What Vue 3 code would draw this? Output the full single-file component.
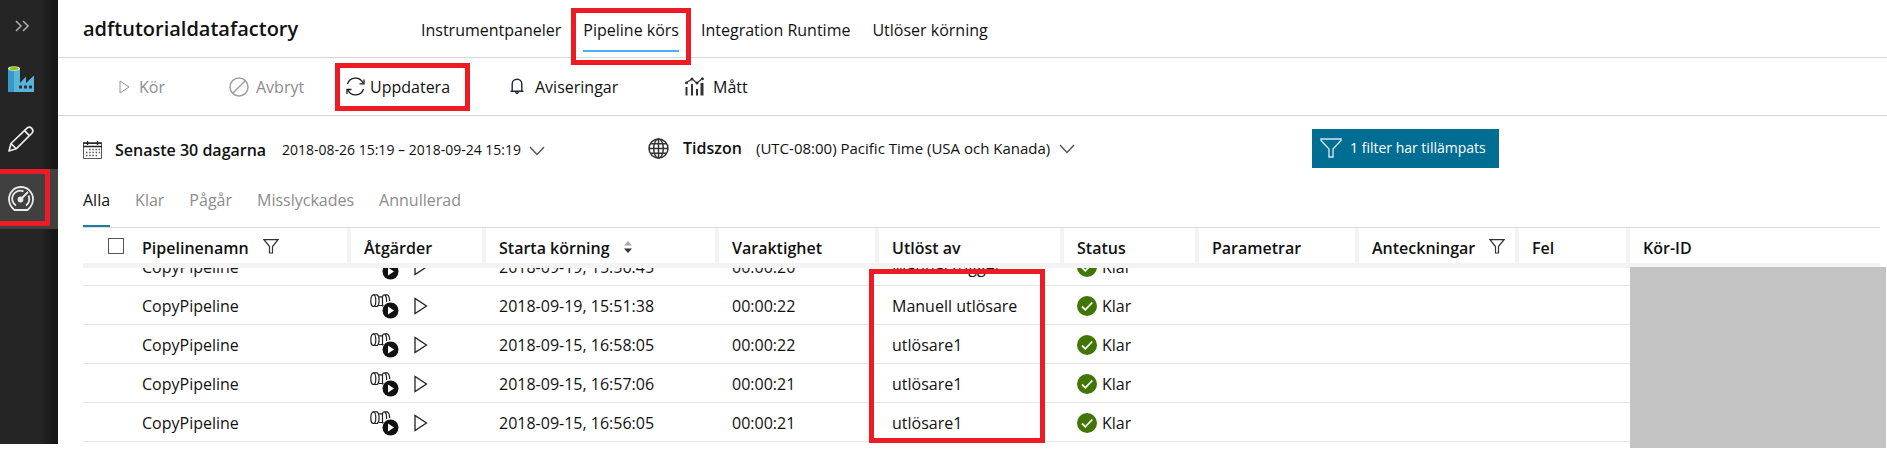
<script setup>
import { ref } from 'vue'

const views = ['Instrumentpaneler', 'Pipeline körs', 'Integration Runtime', 'Utlöser körning']
const activeView = ref('Pipeline körs')

const statuses = ['Alla', 'Klar', 'Pågår', 'Misslyckades', 'Annullerad']
const activeStatus = ref('Alla')

const columns = [
  { key: 'name', label: 'Pipelinenamn', filter: true, check: true },
  { key: 'actions', label: 'Åtgärder' },
  { key: 'start', label: 'Starta körning', sort: true },
  { key: 'duration', label: 'Varaktighet' },
  { key: 'trigger', label: 'Utlöst av' },
  { key: 'status', label: 'Status' },
  { key: 'params', label: 'Parametrar' },
  { key: 'notes', label: 'Anteckningar', filter: true },
  { key: 'error', label: 'Fel' },
  { key: 'runid', label: 'Kör-ID' },
]

const runs = [
  { start: '2018-09-19, 15:56:45', duration: '00:00:20', trigger: 'Manual trigger', scrolled: true },
  { start: '2018-09-19, 15:51:38', duration: '00:00:22', trigger: 'Manuell utlösare' },
  { start: '2018-09-15, 16:58:05', duration: '00:00:22', trigger: 'utlösare1' },
  { start: '2018-09-15, 16:57:06', duration: '00:00:21', trigger: 'utlösare1' },
  { start: '2018-09-15, 16:56:05', duration: '00:00:21', trigger: 'utlösare1' },
]
</script>

<template>
  <div class="app">
    <nav class="rail" aria-label="Navigering">
      <button class="rail-item expand" aria-label="Expandera">
        <svg width="14" height="12" viewBox="0 0 14 12"><path d="M1 1l5 5-5 5M8 1l5 5-5 5" fill="none" stroke="#a8a8a8" stroke-width="1.6" /></svg>
      </button>
      <button class="rail-item" aria-label="Datafabrik">
        <svg width="27" height="27" viewBox="0 0 27 27">
          <path d="M0 2.500h12V26H0z" fill="#3999c6" />
          <path d="M6 2.500h6V17l6-6.500V17l8-7.500V26H6z" fill="#59b4d9" />
          <ellipse cx="6" cy="2.500" rx="6" ry="2.300" fill="#d8e8c8" />
          <ellipse cx="6" cy="2.500" rx="4.600" ry="1.500" fill="#9bc400" />
          <path d="M11 19.500h3v3h-3zM16 19.500h3v3h-3zM21 19.500h3v3h-3z" fill="#26343c" />
        </svg>
      </button>
      <button class="rail-item" aria-label="Författare">
        <svg width="26" height="26" viewBox="0 0 26 26" fill="none" stroke="#ececec" stroke-width="1.7" stroke-linejoin="round">
          <path d="M1 25l2-7.500L19 2.200q2.500-2 4.700.100t.400 4.700L8.200 22.800z" />
          <path d="M3 17.500l5.200 5.300M16.500 4.600l5.100 5.200" />
        </svg>
      </button>
      <button class="rail-item active" aria-label="Övervaka">
        <svg width="26" height="26" viewBox="0 0 26 26" fill="none" stroke="#ececec" stroke-width="1.800">
          <path d="M6.500 24Q1 19.500 1 13a12 12 0 0 1 24 0q0 6.500-5.500 11z" />
          <path d="M8 19.500A8 8 0 0 1 15.500 5.400M20.500 9.500A8 8 0 0 1 18 19.500" />
          <path d="M13.500 12.500L20 6" />
          <circle cx="12.500" cy="13.500" r="2" fill="#ececec" />
        </svg>
        <i class="mark mark-rail"></i>
      </button>
    </nav>

    <main class="main">
      <header class="top">
        <h1>adftutorialdatafactory</h1>
        <nav class="views" aria-label="Vyer">
          <a v-for="view in views" :key="view" href="#" :class="{ active: view === activeView }" @click.prevent="activeView = view">
            {{ view }}<i v-if="view === 'Pipeline körs'" class="mark mark-view"></i>
          </a>
        </nav>
      </header>

      <div class="toolbar">
        <button class="tool run" disabled>
          <svg width="11" height="14" viewBox="0 0 11 14"><path d="M1 1v12l9-6z" fill="none" stroke="#929292" /></svg>
          Kör
        </button>
        <button class="tool cancel" disabled>
          <svg width="20" height="20" viewBox="0 0 20 20" fill="none" stroke="#a0a0a0" stroke-width="1.500"><circle cx="10" cy="10" r="9" /><path d="M3.700 16.300L16.300 3.700" /></svg>
          Avbryt
        </button>
        <button class="tool refresh">
          <svg width="19" height="19" viewBox="0 0 19 19" fill="none" stroke="#1a1a1a" stroke-width="1.300">
            <path d="M1.500 7A8.300 8.300 0 0 1 17 6M17.500 12A8.300 8.300 0 0 1 2 13" />
            <path d="M18 2.500V6.800h-4.500M1 17v-4.500h4.500" />
          </svg>
          Uppdatera
          <i class="mark mark-refresh"></i>
        </button>
        <button class="tool alerts">
          <svg width="14" height="17" viewBox="0 0 14 17" fill="none" stroke="#1f2340" stroke-width="1.400"><path d="M.5 13.300h13M2.200 13V6a4.800 4.800 0 0 1 9.600 0v7M5.500 14q1.500 3 3 0" /></svg>
          Aviseringar
        </button>
        <button class="tool metrics">
          <svg width="19" height="19" viewBox="0 0 19 19" fill="none" stroke="#333">
            <path d="M1.500 10v8.500M7 7v11.500M12 12v6.500" stroke-width="2" /><path d="M17 6v12.500" stroke-width="3" />
            <path d="M1 6l6-4 5 4 5.500-4.500" stroke-width="1.200" />
            <g fill="#333" stroke="none"><circle cx="1.500" cy="5.800" r="1.500" /><circle cx="7" cy="2" r="1.500" /><circle cx="12" cy="6" r="1.500" /><circle cx="17.400" cy="1.700" r="1.500" /></g>
          </svg>
          Mått
        </button>
      </div>

      <div class="filters">
        <button class="range">
          <svg width="19" height="18" viewBox="0 0 19 18">
            <path d="M.5 2.500h18V17.500H.5z" fill="none" stroke="#555" />
            <path d="M0 5.500h19M4.500 0v4M14.500 0v4M0 2h19" stroke="#222" stroke-width="1.300" fill="none" />
            <path d="M6 8.500h11M3 11.500h14M3 14.500h11" stroke="#555" stroke-width="1.500" stroke-dasharray="1.500 1.700" />
          </svg>
          <strong>Senaste 30 dagarna</strong>
          <span class="dates">2018-08-26 15:19 – 2018-09-24 15:19</span>
          <svg class="chev" width="16" height="10" viewBox="0 0 16 10"><path d="M1 1l7 7.500L15 1" fill="none" stroke="#555" stroke-width="1.400" /></svg>
        </button>
        <label class="zone">
          <svg width="21" height="21" viewBox="0 0 21 21" fill="none" stroke="#333" stroke-width="1.500">
            <circle cx="10.500" cy="10.500" r="9.500" /><ellipse cx="10.500" cy="10.500" rx="4.800" ry="9.500" /><path d="M10.500 1v19M1 10.500h19M2.500 5.700h16M2.500 15.300h16" />
          </svg>
          <strong>Tidszon</strong>
          <select>
            <option>(UTC-08:00) Pacific Time (USA och Kanada)</option>
          </select>
          <svg class="chev" width="16" height="10" viewBox="0 0 16 10"><path d="M1 1l7 7.500L15 1" fill="none" stroke="#555" stroke-width="1.400" /></svg>
        </label>
        <button class="applied">
          <svg width="22" height="20" viewBox="0 0 22 20"><path d="M1 1h20v1.500L13 11v8H9v-8L1 2.500z" fill="none" stroke="#cfe6ee" stroke-width="1.400" /></svg>
          1 filter har tillämpats
        </button>
      </div>

      <nav class="statuses" aria-label="Status">
        <a v-for="s in statuses" :key="s" href="#" :class="{ active: s === activeStatus }" @click.prevent="activeStatus = s">{{ s }}</a>
      </nav>

      <section class="runs">
        <table>
          <colgroup>
            <col v-for="c in columns" :key="c.key" :class="'col-' + c.key" />
          </colgroup>
          <thead>
            <tr>
              <th v-for="c in columns" :key="c.key" scope="col" :class="{ first: c.check }">
                <div class="head">
                  <input v-if="c.check" type="checkbox" aria-label="Markera alla" />
                  <span>{{ c.label }}</span>
                  <svg v-if="c.filter" class="funnel" width="16" height="15" viewBox="0 0 16 15"><path d="M1 .7h14L9.500 7.500V14h-3V7.500z" fill="none" stroke="#333" stroke-width="1.200" /></svg>
                  <svg v-if="c.sort" class="sort" width="8" height="12" viewBox="0 0 8 12"><path d="M0 4.500L4 0l4 4.500z" fill="#aaa" /><path d="M0 7.500h8L4 12z" fill="#333" /></svg>
                </div>
              </th>
            </tr>
          </thead>
          <tbody>
            <tr v-for="run in runs" :key="run.start" :class="{ scrolled: run.scrolled }">
              <td class="first"><div class="window"><div class="cell">CopyPipeline</div></div></td>
              <td>
                <div class="window"><div class="cell actions">
                  <button aria-label="Visa aktivitetskörningar">
                    <svg width="29" height="25" viewBox="0 0 29 25">
                      <g fill="none" stroke="#222" stroke-width="1.200">
                        <ellipse cx="3.300" cy="6.700" rx="2.500" ry="5.800" />
                        <path d="M3.300.9h4q1.800 1.500 1.800 5.800t-1.800 5.800h-4" />
                        <path d="M9 2.800h4M9 11.500h4.500" />
                        <path d="M12.500 12.500V2.500q.5-1.600 2-1.600h3q2 1.200 2.200 6.100M15 1q1.800 2 1.600 7" />
                      </g>
                      <circle cx="20.500" cy="16.500" r="8" fill="#111" /><path d="M18 12.500v8l6-4z" fill="#fff" />
                    </svg>
                  </button>
                  <button aria-label="Kör igen">
                    <svg width="14" height="18" viewBox="0 0 14 18"><path d="M1 1.500v15L12.500 9z" fill="none" stroke="#222" stroke-width="1.300" /></svg>
                  </button>
                </div></div>
              </td>
              <td><div class="window"><div class="cell">{{ run.start }}</div></div></td>
              <td><div class="window"><div class="cell">{{ run.duration }}</div></div></td>
              <td><div class="window"><div class="cell">{{ run.trigger }}</div></div></td>
              <td>
                <div class="window"><div class="cell ok">
                  <svg width="20" height="20" viewBox="0 0 20 20"><circle cx="10" cy="10" r="10" fill="#417505" /><path d="M5 10.500l3.300 3.300 7-7.300" fill="none" stroke="#fff" stroke-width="1.800" /></svg>
                  Klar
                </div></div>
              </td>
              <td></td><td></td><td></td><td></td>
            </tr>
          </tbody>
        </table>
        <div class="redacted"></div>
        <i class="mark mark-trigger"></i>
      </section>
    </main>
  </div>
</template>

<style>
body { margin: 0; background: #fff; }
</style>

<style scoped>
* { box-sizing: border-box; }
.app {
  display: flex;
  min-height: 100vh;
  overflow: hidden;
  color: #111;
  font-family: "Open Sans", "Noto Sans", sans-serif;
  font-size: 16px;
  line-height: 24px;
}
button, select {
  margin: 0;
  padding: 0;
  border: 0;
  background: none;
  color: inherit;
  font: inherit;
}
a { color: inherit; text-decoration: none; }
svg { flex: none; display: block; }
strong { font-weight: 600; }
.mark {
  position: absolute;
  border: 5px solid #ed1c24;
  pointer-events: none;
}

.rail {
  flex: none;
  width: 58px;
  margin-bottom: 7px;
  background: linear-gradient(90deg, #252525 40px, #171717 54px);
}
.rail-item {
  position: relative;
  display: flex;
  align-items: center;
  width: 100%;
  height: 60px;
  padding-left: 8px;
}
.rail-item.expand { height: 49px; padding: 2px 0 0 15px; }
.rail-item.active { background: #404040; }
.mark-rail { top: 0; right: 8px; bottom: 3px; left: 0; border-left: 0; }

.main { flex: 1; min-width: 0; }
.top {
  display: flex;
  align-items: center;
  height: 58px;
  padding-left: 25px;
  border-bottom: 1px solid #d6d6d6;
}
h1 {
  width: 338px;
  margin: 0;
  padding-bottom: 0;
  font-size: 20px;
  font-weight: 600;
  line-height: 28px;
}
.views { display: flex; gap: 22px; }
.views a { position: relative; padding: 12px 0 10px; white-space: nowrap; }
.views a.active { box-shadow: inset 0 -2px #4ab0ff; }
.mark-view { top: 2px; right: -12px; bottom: -13px; left: -12px; }

.toolbar {
  display: flex;
  align-items: center;
  height: 58px;
  padding-left: 61px;
  border-bottom: 1px solid #d6d6d6;
}
.tool { position: relative; display: flex; align-items: center; white-space: nowrap; }
.tool:disabled { color: #8c8c8c; }
.run { width: 110px; gap: 9px; }
.cancel { width: 117px; gap: 7px; }
.refresh { width: 164px; gap: 5px; }
.alerts { width: 175px; gap: 11px; }
.metrics { gap: 9px; }
.mark-refresh { top: -12px; right: 40px; bottom: -12px; left: -11px; }

.filters { display: flex; align-items: center; height: 64px; padding-left: 25px; }
.range, .zone, .applied { display: flex; align-items: center; white-space: nowrap; }
.range { width: 565px; padding-top: 4px; }
.range strong { width: 167px; margin-left: 13px; text-align: left; }
.dates { font-size: 14px; }
select { font-size: 15px; }
.chev { margin: 2px 0 0 8px; }
.zone { width: 664px; }
.zone strong { width: 73px; margin-left: 14px; }
select { appearance: none; outline: 0; }
.applied {
  width: 187px;
  height: 39px;
  padding-left: 8px;
  gap: 8px;
  background: #006d93;
  color: #fff;
  font-size: 14px;
}

.statuses { display: flex; gap: 25px; height: 47px; padding-left: 25px; color: #8c8c8c; }
.statuses a { padding-top: 8px; }
.statuses a.active { color: #111; box-shadow: inset 0 -2px #1a7f9c; }

.runs { position: relative; margin: 0 7px 0 25px; border-top: 1px solid #dcdcdc; }
table { width: 100%; table-layout: fixed; border-collapse: separate; border-spacing: 0; }
.col-name { width: 268px; }
.col-actions, .col-status { width: 135px; }
.col-start { width: 233px; }
.col-duration, .col-params, .col-notes { width: 160px; }
.col-trigger { width: 185px; }
.col-error { width: 111px; }
th {
  padding: 0 0 0 13px;
  border-right: 4px solid #f3f3f3;
  border-bottom: 5px solid #f3f3f3;
  font-weight: 600;
  text-align: left;
}
th:last-child { border-right: 0; }
.head { display: flex; align-items: center; height: 35px; white-space: nowrap; }
.head span { padding-top: 4px; }
th.first { padding-left: 25px; }
.head input {
  appearance: none;
  width: 16px;
  height: 16px;
  margin: 0 18px 0 0;
  border: 1px solid #555;
  background: #fff;
}
.funnel, .sort { margin: 2px 0 0 14px; }
td { padding: 0 0 0 13px; border-bottom: 1px solid #e6e6e6; }
td.first { padding-left: 59px; }
.window {
  display: flex;
  flex-direction: column;
  justify-content: flex-end;
  height: 38px;
  overflow: hidden;
}
.scrolled .window { height: 17px; }
.cell { flex: none; display: flex; align-items: center; height: 38px; padding-top: 2px; white-space: nowrap; }
.actions { gap: 15px; padding-left: 6px; }
.ok { gap: 5px; }
.redacted { position: absolute; top: 39px; right: -6px; bottom: -6px; left: 1547px; background: #c3c3c3; }
.mark-trigger { top: 41px; bottom: -1px; left: 786px; width: 176px; }
</style>
